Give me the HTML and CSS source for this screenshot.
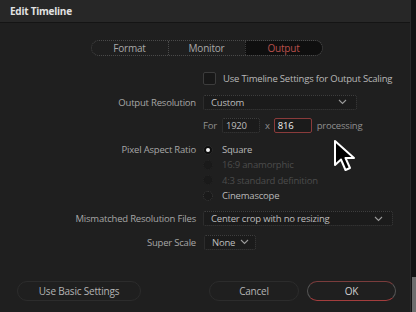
FILE: index.html
```html
<!DOCTYPE html>
<html>
<head>
<meta charset="utf-8">
<link rel="stylesheet" href="styles.css">
</head>
<body>
<div class="page">
  <div class="dialog">
    <div class="titlebar">Edit Timeline</div>
    <div class="content">
      <div class="tabs">
        <div class="tab">Format</div>
        <div class="tab sep">Monitor</div>
        <div class="tab active">Output</div>
      </div>
      <div class="form">
        <div class="row">
          <div class="label"></div>
          <div class="ctrl"><span class="checkbox"></span><span class="text">Use Timeline Settings for Output Scaling</span></div>
        </div>
        <div class="row">
          <div class="label">Output Resolution</div>
          <div class="ctrl"><div class="select w-res"><span>Custom</span><svg class="chev" width="9" height="6" viewBox="0 0 9 6"><path d="M1 1 L4.5 4.5 L8 1" fill="none" stroke="#9a9a9a" stroke-width="1.1"/></svg></div></div>
        </div>
        <div class="row">
          <div class="label"></div>
          <div class="ctrl"><span class="text dim2">For</span><span class="input w-in">1920</span><span class="text dim2 xsep">x</span><span class="input w-in focus">816</span><span class="text dim2 proc">processing</span></div>
        </div>
        <div class="row radios-row">
          <div class="label">Pixel Aspect Ratio</div>
          <div class="radios">
            <div class="radio-item"><span class="radio on"></span><span class="text">Square</span></div>
            <div class="radio-item disabled"><span class="radio"></span><span class="text">16:9 anamorphic</span></div>
            <div class="radio-item disabled"><span class="radio"></span><span class="text">4:3 standard definition</span></div>
            <div class="radio-item"><span class="radio"></span><span class="text">Cinemascope</span></div>
          </div>
        </div>
        <div class="row">
          <div class="label">Mismatched Resolution Files</div>
          <div class="ctrl"><div class="select w-mis"><span>Center crop with no resizing</span><svg class="chev" width="9" height="6" viewBox="0 0 9 6"><path d="M1 1 L4.5 4.5 L8 1" fill="none" stroke="#9a9a9a" stroke-width="1.1"/></svg></div></div>
        </div>
        <div class="row">
          <div class="label">Super Scale</div>
          <div class="ctrl"><div class="select w-ss"><span>None</span><svg class="chev" width="9" height="6" viewBox="0 0 9 6"><path d="M1 1 L4.5 4.5 L8 1" fill="none" stroke="#9a9a9a" stroke-width="1.1"/></svg></div></div>
        </div>
      </div>
      <div class="footer">
        <div class="btn b-basic">Use Basic Settings</div>
        <div class="right-btns">
          <div class="btn b-cancel">Cancel</div>
          <div class="btn b-ok">OK</div>
        </div>
      </div>
    </div>
    <svg class="cursor" width="26" height="34" viewBox="0 0 26 34">
      <path d="M2 2 L2 26 L8 20.5 L12.5 31 L17 29 L12.5 19 L21 19 Z" fill="#000" stroke="#fff" stroke-width="2" stroke-linejoin="round"/>
    </svg>
  </div>
  <div class="side">
    <div class="side-top"></div>
    <div class="side-bar"></div>
  </div>
</div>
</body>
</html>
```

FILE: styles.css
```css
html, body {
  margin: 0;
  padding: 0;
  background: #161616;
}
body {
  font-family: "Open Sans", "Noto Sans", sans-serif;
  font-size: 9.5px;
  letter-spacing: -0.2px;
  color: #b4b4b4;
}
.page {
  display: flex;
  width: 416px;
  height: 312px;
}
.dialog {
  position: relative;
  width: 410px;
  height: 312px;
  background: #1f1f1f;
  border-right: 1px solid #2b2b2b;
  display: flex;
  flex-direction: column;
}
.side {
  flex: 1;
  display: flex;
  flex-direction: column;
  background: #141414;
}
.side-top { flex: 0 0 277px; }
.side-bar { flex: 1; background: #6e6e6e; margin-left: 1px; }
.titlebar {
  height: 22px;
  line-height: 22px;
  padding-left: 10px;
  background: #272727;
  border-bottom: 1px solid #141414;
  color: #e2e2e2;
  font-weight: 700;
  font-size: 10px;
  letter-spacing: -0.25px;
}
.content {
  flex: 1;
  display: flex;
  flex-direction: column;
}
.tabs {
  align-self: center;
  margin-top: 17px;
  margin-left: 3px;
  display: flex;
  height: 16px;
  border: 1px dotted #4a4a4a;
  border-radius: 8px;
  overflow: hidden;
  box-sizing: border-box;
}
.tab {
  width: 76px;
  text-align: center;
  line-height: 14px;
  color: #a8a8a8;
  font-size: 10px;
}
.tab.sep {
  border-left: 1px dotted #4a4a4a;
}
.tab.active {
  background: #0f0f0f;
  color: #b9504c;
  border-left: 1px dotted #3a3a3a;
}
.form {
  margin-top: 11px;
  display: flex;
  flex-direction: column;
}
.row {
  display: flex;
  align-items: center;
  height: 23.5px;
}
.label {
  width: 196px;
  text-align: right;
  padding-right: 7px;
  box-sizing: content-box;
  color: #a6a6a6;
  flex: none;
}
.ctrl {
  display: flex;
  align-items: center;
}
.text { color: #b8b8b8; white-space: nowrap; }
.dim2 { color: #8f8f8f; }
.checkbox {
  width: 11px;
  height: 11px;
  border: 1px solid #3c3c3c;
  border-radius: 2px;
  background: #181818;
  margin-right: 7px;
}
.select {
  height: 15px;
  box-sizing: border-box;
  border: 1px dotted #3e3e3e;
  background: #1b1b1b;
  border-radius: 2px;
  display: flex;
  align-items: center;
  justify-content: space-between;
  padding: 0 9px 0 7px;
  color: #bdbdbd;
}
.w-res { width: 154px; }
.w-mis { width: 190px; }
.w-ss { width: 52px; padding-right: 6px; margin-left: 1px; }
.input {
  height: 15px;
  box-sizing: border-box;
  border: 1px dotted #3e3e3e;
  background: #1b1b1b;
  border-radius: 2px;
  padding: 0 3px;
  line-height: 13px;
  color: #bdbdbd;
}
.w-in { width: 38px; margin-left: 5px; }
.focus { border: 1px solid #8a3b3b; color: #f0f0f0; margin-left: 0; }
.xsep { margin: 0 4px 0 5px; }
.proc { margin-left: 5px; }
.radios-row {
  height: auto;
  align-items: flex-start;
  margin: 4.5px 0 3.75px;
}
.radios-row .label { line-height: 15px; }
.radios {
  display: flex;
  flex-direction: column;
}
.radio-item {
  display: flex;
  align-items: center;
  height: 15.3px;
}
.radio {
  width: 10px;
  height: 10px;
  border-radius: 50%;
  border: 1px dotted #3c3c3c;
  background: #1a1a1a;
  margin: 0 9px 0 0;
  box-sizing: border-box;
  position: relative;
}
.radio.on {
  border: 1px solid #2a2a2a;
  background: #0e0e0e;
}
.radio.on::after {
  content: "";
  position: absolute;
  left: 2px;
  top: 2px;
  width: 4px;
  height: 4px;
  border-radius: 50%;
  background: #f2f2f2;
}
.disabled .text { color: #4c4c4c; }
.disabled .radio { border-color: #262626; }
.footer {
  margin-top: auto;
  margin-bottom: 11px;
  display: flex;
  justify-content: space-between;
  padding: 0 14px 0 17px;
}
.right-btns { display: flex; gap: 8px; }
.btn {
  height: 20px;
  box-sizing: border-box;
  border: 1px solid #2c2c2c;
  border-radius: 10px;
  background: #1f1f1f;
  display: flex;
  align-items: center;
  justify-content: center;
  color: #b4b4b4;
  font-size: 10px;
}
.b-basic { width: 124px; }
.b-cancel { width: 90px; }
.b-ok {
  width: 89px;
  border: 1px solid #555;
  border-top-color: #7a3c3c;
  border-bottom-color: #a33d3d;
  color: #d0d0d0;
}
.cursor {
  position: absolute;
  left: 333px;
  top: 139px;
}
```
